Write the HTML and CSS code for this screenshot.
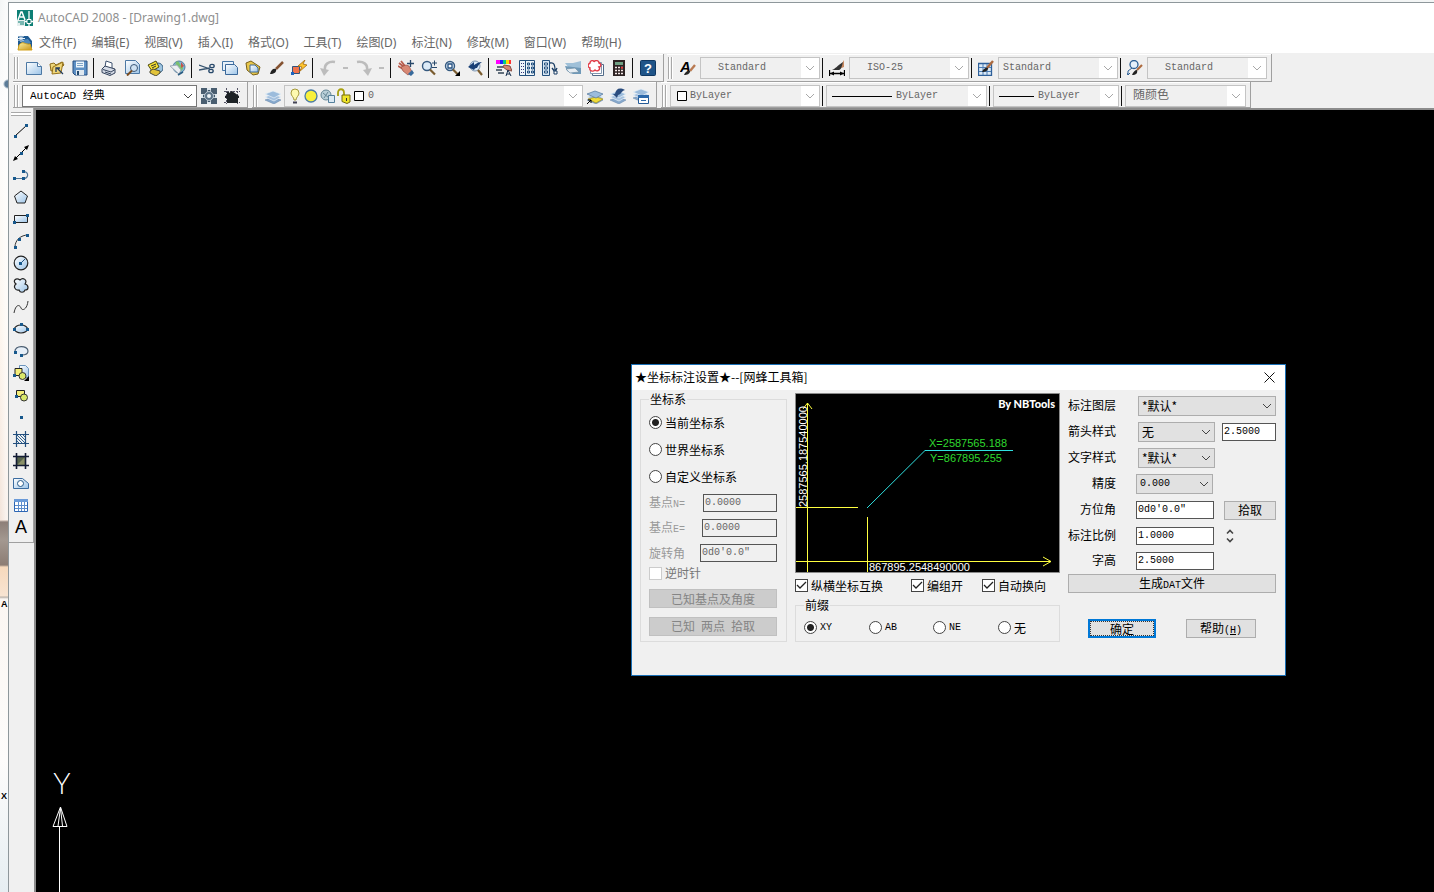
FILE: index.html
```html
<!DOCTYPE html>
<html lang="zh-CN">
<head>
<meta charset="utf-8">
<title>AutoCAD 2008 - [Drawing1.dwg]</title>
<link rel="stylesheet" href="styles.css">
</head>
<body>
<svg class="defs" width="0" height="0" aria-hidden="true">
  <defs>
    <linearGradient id="sheet" x1="0" y1="0" x2="1" y2="1"><stop offset="0" stop-color="#fff"/><stop offset="1" stop-color="#9cc4e8"/></linearGradient>
    <linearGradient id="gold" x1="0" y1="0" x2="1" y2="1"><stop offset="0" stop-color="#fbf0a0"/><stop offset="1" stop-color="#c89418"/></linearGradient>
    <g id="stack"><path d="M0 12l8-3 8 3-7 4z" fill="#86a8cc" stroke="#6484a8" stroke-width=".5"/><path d="M0 9l8-3 8 3-7 4z" fill="#a4c0de" stroke="#e8f0f8" stroke-width=".7"/><path d="M0 6l8-3 8 3-7 4z" fill="#9cbcdc" stroke="#e8f0f8" stroke-width=".7"/></g>
    <g id="lens"><circle cx="6" cy="6" r="4.500" fill="#dcebf8" stroke="#35597f" stroke-width="1.400"/><path d="M9 9.500l5 5" stroke="#7a5c30" stroke-width="2.200"/></g>
    <g id="printer"><path d="M4 7l1-6 6 2v6z" fill="#fff" stroke="#3e5270"/><path d="M1 9l3-3 10 3v4l-5 2.500-8-3z" fill="#d5dbe6" stroke="#34435c"/><path d="M2 9.500l8 2.500 4-2.500M4 12l6 2" stroke="#34435c" fill="none"/></g>
  </defs>
</svg>
<div class="desk" aria-hidden="true"><span class="tile a">A</span><span class="tile x">X</span></div>
<main class="app">
  <header class="title">
    <svg width="16" height="16" viewBox="0 0 16 16"><path d="M0 0h16v16H0z" fill="#0d7f75"/><path d="M0 10h8v6H0z" fill="#e4efee"/><path d="M1 10L4 2h1l3 8M3 7h4" stroke="#fff" stroke-width="1.500" fill="none"/><path d="M12 1v8M8 11.500h8M12 14v2" stroke="#fff" stroke-width="1.300"/><path d="M10 9.500h4v4h-4z" fill="#0d6f68" stroke="#fff"/><path d="M1 12h6M3 14h4" stroke="#0d7f75"/></svg>
    <span>AutoCAD 2008 - [Drawing1.dwg]</span>
  </header>
  <nav class="menu">
    <svg width="16" height="16" viewBox="0 0 16 16"><path d="M1 1h10l4 5v9H1z" fill="#1e5a92"/><path d="M5 5l6-1 3 4-9 2z" fill="#4e88bc"/><path d="M4 0v7M0 3.500h8M1.500 1l5 5M6.500 1l-5 5" stroke="#e8f2fa"/><path d="M1 15l1-5c4-5 6 0 11-1l2 6z" fill="url(#gold)" stroke="#d3a21c"/></svg>
    <button>文件(F)</button><button>编辑(E)</button><button>视图(V)</button><button>插入(I)</button><button>格式(O)</button><button>工具(T)</button><button>绘图(D)</button><button>标注(N)</button><button>修改(M)</button><button>窗口(W)</button><button>帮助(H)</button>
  </nav>

  <div class="row first">
    <div class="bar" role="toolbar" aria-label="标准">
      <i class="grip"></i>
      <button class="tool" aria-label="新建"><svg viewBox="0 0 16 16"><path d="M.5 2.500h11l4 4v8H.5z" fill="url(#sheet)" stroke="#4c78a4"/><path d="M11.500 2.500v4h4" fill="#fff" stroke="#4c78a4"/></svg></button>
      <button class="tool" aria-label="打开"><svg viewBox="0 0 16 16"><path d="M1 4l4-1 2 2 6-3 2 3-6 5-7 1z" fill="url(#gold)" stroke="#8c6a18"/><path d="M3 14l1-7 10-5-2 11z" fill="#f0d678" stroke="#96731c"/><path d="M8 8l6 6M7 12V8h4" stroke="#243c5c" stroke-width="1.300" fill="none"/></svg></button>
      <button class="tool" aria-label="保存"><svg viewBox="0 0 16 16"><path d="M1 1h14v14H3l-2-2z" fill="#5d8fc4" stroke="#274f82"/><path d="M4 1.500h8v6H4z" fill="#eef5fb"/><path d="M5 3.500h6M5 5.500h6" stroke="#82a6c8"/><path d="M4 10h8v5H4z" fill="#dfe8f0"/><path d="M5 11h2v4H5z" fill="#24496f"/></svg></button>
      <i class="sep"></i>
      <button class="tool" aria-label="打印"><svg viewBox="0 0 16 16"><use href="#printer"/></svg></button>
      <button class="tool" aria-label="打印预览"><svg viewBox="0 0 16 16"><path d="M1.500.500h10l4 4v9h-14z" fill="url(#sheet)" stroke="#4c78a4"/><circle cx="10" cy="8" r="3.500" fill="#cfe2f2" stroke="#3c5878"/><path d="M8 10.500l-5 5" stroke="#7a4c20" stroke-width="2"/></svg></button>
      <button class="tool" aria-label="发布"><svg viewBox="0 0 16 16"><circle cx="11" cy="8" r="5" fill="#9ec4e0" stroke="#365e80"/><path d="M1 5l8-4 3 6-7 4z" fill="#f8e234" stroke="#4e4b12"/><path d="M4 6l5-2M5 8l4-2" stroke="#333"/><path d="M3 11l3-2 7 2v2l-4 3-6-3z" fill="#e2c33a" stroke="#4d4d38"/></svg></button>
      <button class="tool" aria-label="三维 DWF"><svg viewBox="0 0 16 16"><circle cx="9" cy="7" r="6" fill="#7db4dc" stroke="#567f9c"/><path d="M6 2c4-2 3 3 5 3s4 4-1 7c-1-3-4-2-5-5z" fill="#7cc070"/><path d="M11 2l3 4-3 2z" fill="#c4534a"/><path d="M0 6l7-1 4 5-2 4z" fill="#eceff2" stroke="#a0aab8"/><path d="M8 15l5-3" stroke="#2a5c82" stroke-width="1.500"/></svg></button>
      <i class="sep"></i>
      <button class="tool" aria-label="剪切"><svg viewBox="0 0 16 16"><path d="M0 5l11 4M0 10l11-2" stroke="#36536f" stroke-width="1.300"/><ellipse cx="13" cy="6" rx="2.200" ry="1.700" fill="none" stroke="#27486a" stroke-width="1.300"/><ellipse cx="12" cy="11" rx="2.200" ry="1.700" fill="none" stroke="#27486a" stroke-width="1.300"/></svg></button>
      <button class="tool" aria-label="复制"><svg viewBox="0 0 16 16"><path d="M.5 1.500h11v9H.5z" fill="#e8f1fa" stroke="#4676a6"/><path d="M3.500 4.500h9l3 3v7h-12z" fill="url(#sheet)" stroke="#3a689a"/></svg></button>
      <button class="tool" aria-label="粘贴"><svg viewBox="0 0 16 16"><path d="M1 3l5-2 9 6-2 7-5 1-6-5z" fill="#e7c64a" stroke="#78601a"/><path d="M5 5h5l3 3v4H5z" fill="url(#sheet)" stroke="#3a689a"/></svg></button>
      <button class="tool" aria-label="特性匹配"><svg viewBox="0 0 16 16"><path d="M15 2L8 9" stroke="#855332" stroke-width="2.500"/><path d="M2 14c1-4 3-6 6-5 1 3-2 5-6 5z" fill="#222"/></svg></button>
      <button class="tool" aria-label="块编辑器"><svg viewBox="0 0 16 16"><path d="M1.500 6.500h7v7h-7z" fill="#f0734c" stroke="#31527c"/><path d="M14 0L7 6l4 1-3 5 8-7-4-1z" fill="#ffc52c" stroke="#a26812" stroke-width=".8"/><path d="M0 12h3v3H0z" fill="#1c64c0"/></svg></button>
      <i class="sep"></i>
      <button class="tool" aria-label="放弃" disabled><svg viewBox="0 0 16 16"><path d="M15 2C9 1 4 4 5 10" fill="none" stroke="#bcbcbc" stroke-width="2.500"/><path d="M0 8l9 2-5 6z" fill="#bcbcbc"/></svg></button>
      <button class="drop" aria-label="放弃列表" disabled></button>
      <button class="tool" aria-label="重做" disabled><svg viewBox="0 0 16 16"><path d="M1 2c6-1 11 2 10 8" fill="none" stroke="#bcbcbc" stroke-width="2.500"/><path d="M16 8l-9 2 5 6z" fill="#bcbcbc"/></svg></button>
      <button class="drop" aria-label="重做列表" disabled></button>
      <i class="sep"></i>
      <button class="tool" aria-label="平移"><svg viewBox="0 0 16 16"><path d="M1 3l5 4M0 6l5 3M3 1l4 5" stroke="#b85c4c" stroke-width="1.800"/><path d="M3 7l5-2 3 1 3 6-4 3-5-4z" fill="#d88874" stroke="#994c40" stroke-width=".7"/><path d="M10 14l4-4 2 3-3 3z" fill="#376a9c"/><path d="M12.500 0v7M9 3.500h7" stroke="#27486a" stroke-width="1.300"/></svg></button>
      <button class="tool" aria-label="实时缩放"><svg viewBox="0 0 16 16"><use href="#lens"/><path d="M11 3h5M13.500.500v5M11 7.500h5" stroke="#27486a"/></svg></button>
      <button class="tool" aria-label="窗口缩放"><svg viewBox="0 0 16 16"><use href="#lens"/><path d="M4 4h4v4H4z" fill="#fff" stroke="#245080" stroke-width="1.300"/><path d="M16 11v5h-5z" fill="#000"/></svg></button>
      <button class="tool" aria-label="缩放上一个"><svg viewBox="0 0 16 16"><circle cx="8" cy="6" r="5" fill="#dcebf8" stroke="#7c94b0"/><path d="M11 10l4 5" stroke="#7a5c30" stroke-width="2.200"/><path d="M1 7l6-5v3c3-2 5-3 8-3-3 2-4 4-5 6-1 0-2 0-3 2z" fill="#183f76"/></svg></button>
      <i class="sep"></i>
      <button class="tool" aria-label="特性"><svg viewBox="0 0 16 16"><path d="M0 0h4v4H0z" fill="#f0f"/><path d="M4 0h3v4H4z" fill="#22f"/><path d="M7 0h3v4H7z" fill="#0c8"/><path d="M10 0h3v4h-3z" fill="#fd0"/><path d="M13 0h2v4h-2z" fill="#f33"/><path d="M8 5l6 1 2 5-5-1-4-3z" fill="#d58672" stroke="#844b42"/><path d="M1 7h6M0 10h6M2 13h6" stroke="#345" stroke-width="1.300"/><path d="M10 16l2-6 3 6M11 14h3" stroke="#112b4a" fill="none"/></svg></button>
      <button class="tool" aria-label="设计中心"><svg viewBox="0 0 16 16"><path d="M.5.500h15v15H.5z" fill="#eef5fa" stroke="#234f7c"/><path d="M6.500 0v16" stroke="#234f7c"/><path d="M2 3.500h3M2 6.500h3M2 9.500h3M2 12.500h3" stroke="#337" stroke-dasharray="1 1"/><path d="M8.500 3h2v2h-2zm4 0h2v2h-2zm-4 4h2v2h-2zm4 0h2v2h-2zm-4 4h2v2h-2zm4 0h2v2h-2z" fill="#cfe1f0" stroke="#214f7e"/></svg></button>
      <button class="tool" aria-label="工具选项板"><svg viewBox="0 0 16 16"><path d="M.5.500h7v15h-7z" fill="#d7e6f3" stroke="#234f7c"/><path d="M2.500 3h3v2h-3zm0 4h3v2h-3zm0 4h3v2h-3z" fill="#fff" stroke="#234f7c"/><path d="M8 3c4-1 5 2 5 7M10 8l3 4 2-4" stroke="#163a62" fill="none" stroke-width="1.300"/><path d="M12 11h3v3h-3z" fill="#fff" stroke="#163a62"/></svg></button>
      <button class="tool" aria-label="图纸集"><svg viewBox="0 0 16 16"><path d="M0 3h8l8-2v8L4 8z" fill="#9fc0d8"/><path d="M0 6l8 1 8 1v6h-8L2 11z" fill="#6f99b8"/><path d="M1 9l9-1 4 4-9 1z" fill="#e7edf2" stroke="#7190a8" stroke-width=".7"/></svg></button>
      <button class="tool" aria-label="标记集"><svg viewBox="0 0 16 16"><path d="M4.500 4.500h11v11h-11z" fill="#fff" stroke="#506a88"/><path d="M2.500 2.500h11v11h-11z" fill="#fff" stroke="#8296ae"/><path d="M2 3c0-3 4-3 4-1 1-2 5-2 5 1 3 1 2 4 0 4 2 3-2 5-4 3-2 2-6 1-5-2-3-1-2-4 0-5z" fill="#fff" stroke="#e23c48" stroke-width="1.400"/></svg></button>
      <button class="tool" aria-label="计算器"><svg viewBox="0 0 16 16"><path d="M2 0h12v16H2z" fill="#2c2222"/><path d="M4 2h8v3H4z" fill="#6fa083"/><path d="M4 7.500h8M4 10.500h8M4 13.500h8" stroke="#f4e8e8" stroke-width="1.600" stroke-dasharray="2 1"/><path d="M10 7h2v1.500h-2z" fill="#e33"/></svg></button>
      <i class="sep"></i>
      <button class="tool" aria-label="帮助"><svg viewBox="0 0 16 16"><rect x=".5" y=".5" width="15" height="15" rx="1" fill="#1f5488" stroke="#0f3761"/><text x="8" y="13" class="help">?</text></svg></button>
    </div>
    <div class="bar" role="toolbar" aria-label="样式">
      <i class="grip"></i>
      <button class="tool wide" aria-label="文字样式"><svg viewBox="0 0 16 16"><text x="0" y="12" class="letter">A</text><path d="M15 5l-5 6" stroke="#b97a52" stroke-width="2.400"/><path d="M4 15c1-3 4-5 6-4 0 3-3 4-6 4z" fill="#222"/></svg></button>
      <select class="combo pad" aria-label="文字样式列表" disabled><option>Standard</option></select>
      <i class="sep"></i>
      <button class="tool wide" aria-label="标注样式"><svg viewBox="0 0 16 16"><path d="M15 0v7l-5 2z" fill="#c98a62"/><path d="M3 10c3-1 5-4 11-8-1 4-2 8-4 8z" fill="#333"/><path d="M.5 10v6M15.500 10v6M1 13.500h14" stroke="#000" stroke-width="1.300"/><path d="M1 13.500l4-2v4zM15 13.500l-4-2v4z"/></svg></button>
      <select class="combo pad" aria-label="标注样式列表" disabled><option>ISO-25</option></select>
      <i class="sep"></i>
      <button class="tool wide" aria-label="表格样式"><svg viewBox="0 0 16 16"><path d="M.5 3.500h13v12H.5z" fill="#dceaf6" stroke="#2f609a" stroke-width="1.300"/><path d="M1 7.500h12M1 11.500h12M5 4v11M9 4v11" stroke="#4c7db4"/><path d="M15 1L9 8" stroke="#ad6a3e" stroke-width="2.400"/><path d="M4 12c1-3 4-5 6-4 0 3-3 4-6 4z" fill="#222"/></svg></button>
      <select class="combo" aria-label="表格样式列表" disabled><option>Standard</option></select>
      <i class="sep"></i>
      <button class="tool wide" aria-label="多重引线样式"><svg viewBox="0 0 16 16"><circle cx="7" cy="4.500" r="4" fill="#e5f0fa" stroke="#2c5f94" stroke-width="1.300"/><path d="M5 8l-4 3v4M0 13l1 2 2-2" stroke="#2c5f94" fill="none"/><path d="M15 5l-5 5" stroke="#ad6a3e" stroke-width="2.200"/><path d="M5 15c1-3 3-5 5-5 1 3-1 5-5 5z" fill="#222"/></svg></button>
      <select class="combo pad" aria-label="多重引线样式列表" disabled><option>Standard</option></select>
    </div>
  </div>

  <div class="row second">
    <div class="bar" role="toolbar" aria-label="工作空间">
      <i class="grip"></i>
      <select class="combo space" aria-label="工作空间列表"><option>AutoCAD 经典</option></select>
      <button class="tool" aria-label="工作空间设置"><svg viewBox="0 0 16 16"><path d="M0 0h16v16H0z" fill="#4a5e70"/><path d="M6 0h4v16H6zM0 6h16v4H0z" fill="#dfe8ee"/><path d="M8 2v12M2 8h12M4 4l8 8M12 4l-8 8" stroke="#40566a" stroke-width="2.500"/><circle cx="8" cy="8" r="4.500" fill="#5d7488" stroke="#dfe8ee" stroke-width=".7"/><circle cx="8" cy="8" r="2" fill="#eef3f6"/></svg></button>
      <button class="tool" aria-label="我的工作空间"><svg viewBox="0 0 16 16"><path d="M2.500 0v16M0 3.500h16M13.500 0v16M0 14.500h16" stroke="#556" stroke-dasharray="2 1"/><path d="M1 8l2-1V4h2v1l3-2 7 5v2h-1v5H3v-5H1z" fill="#1d2226"/></svg></button>
    </div>
    <div class="bar" role="toolbar" aria-label="图层">
      <i class="grip"></i>
      <button class="tool" aria-label="图层特性管理器"><svg viewBox="0 0 16 16"><use href="#stack"/></svg></button>
      <div class="combo holder layer">
        <svg width="74" height="16" viewBox="0 0 74 16"><path d="M4 12C4 9 1 8 1 5a4 4 0 018 0c0 3-3 4-3 7z" fill="#fdf9b0" stroke="#a3983c"/><path d="M3 14.500h4" stroke="#445" stroke-width="2"/><circle cx="21" cy="8" r="6" fill="#f8f03c" stroke="#4a7ba4" stroke-width="1.300"/><circle cx="36" cy="7" r="5" fill="#b9cfd8" stroke="#668796"/><path d="M38.500 7.500h6v7h-6z" fill="#dbe9f3" stroke="#55809c"/><path d="M33 5l6 5M38 4l-4 6" stroke="#668796"/><path d="M48 8V5c0-5 6-5 6 0v4" fill="none" stroke="#a8a010" stroke-width="1.800"/><path d="M52 7h8v7l-3 1.500-5-2z" fill="#eee428" stroke="#736b12"/><path d="M56.500 10v3" stroke="#333"/><path d="M64.500 3.500h9v9h-9z" fill="#fff" stroke="#000"/></svg>
        <select aria-label="图层列表" disabled><option>0</option></select>
      </div>
      <button class="tool" aria-label="将对象的图层置为当前"><svg viewBox="0 0 16 16"><use href="#stack"/><path d="M1 11l8-2 7 2-7 4z" fill="#f0dc38" stroke="#9a8a20" stroke-width=".7"/><path d="M0 6l8-3 8 3-7 4z" fill="#9cbcdc" stroke="#56789c" stroke-width=".7"/><path d="M0 16l4-4M1 12h3v3" stroke="#000" fill="none"/></svg></button>
      <button class="tool" aria-label="上一个图层"><svg viewBox="0 0 16 16"><use href="#stack"/><path d="M3 6l4 4 1-3c3 0 3-4 7-5C9-1 6 1 5 6z" fill="#2a4c7e"/></svg></button>
      <button class="tool" aria-label="图层状态管理器"><svg viewBox="0 0 16 16"><g transform="translate(0 -2)"><use href="#stack"/></g><path d="M5.500 7.500h10v8h-10z" fill="#fff" stroke="#245a96"/><path d="M5 7h11v3H5z" fill="#2d69aa"/><path d="M8 12.500h5" stroke="#2d69aa"/></svg></button>
    </div>
    <div class="bar props" role="toolbar" aria-label="特性">
      <i class="grip"></i>
      <div class="combo holder color"><svg width="12" height="12" viewBox="0 0 12 12"><path d="M1.500 1.500h9v9h-9z" fill="#fff" stroke="#000"/></svg><select aria-label="颜色" disabled><option>ByLayer</option></select></div>
      <i class="sep"></i>
      <div class="combo holder ltype"><svg width="60" height="12" viewBox="0 0 60 12"><path d="M0 6.500h60" stroke="#000"/></svg><select aria-label="线型" disabled><option>ByLayer</option></select></div>
      <i class="sep"></i>
      <div class="combo holder lweight"><svg width="35" height="12" viewBox="0 0 35 12"><path d="M0 6.500h35" stroke="#000"/></svg><select aria-label="线宽" disabled><option>ByLayer</option></select></div>
      <i class="sep"></i>
      <select class="combo plot" aria-label="打印样式" disabled><option>随颜色</option></select>
    </div>
  </div>

  <div class="work">
    <aside class="side">
      <div class="palette" role="toolbar" aria-label="绘图" aria-orientation="vertical">
      <i class="hgrip"></i>
      <button aria-label="直线"><svg viewBox="0 0 16 16"><path d="M2 13L14 2" stroke="#000"/><path class="n" d="M1 12h3v3H1zM12 1h3v3h-3z"/></svg></button>
      <button aria-label="构造线"><svg viewBox="0 0 16 16"><path d="M2 14L14 2" stroke="#000"/><path d="M0 16l2-5 3 3zM16 0l-5 2 3 3z"/><path class="n" d="M7 7h3v3H7z"/></svg></button>
      <button aria-label="多段线"><svg viewBox="0 0 16 16"><path d="M2 11.500h8c6 0 6-6 1-7" stroke="#4e7496" stroke-width="1.200" fill="none"/><path class="n" d="M0 10h3v3H0zM9 10h3v3H9zM9 3h3v3H9z"/></svg></button>
      <button aria-label="正多边形"><svg viewBox="0 0 16 16"><path d="M8 2l6.500 5-2.500 7H4L1.500 7z" fill="url(#sheet)" stroke="#222"/></svg></button>
      <button aria-label="矩形"><svg viewBox="0 0 16 16"><path d="M1.500 4.500h13v7h-13z" fill="url(#sheet)" stroke="#222"/><path class="n" d="M0 10h3v3H0zM13 3h3v3h-3z"/></svg></button>
      <button aria-label="圆弧"><svg viewBox="0 0 16 16"><path d="M2 14C2 7 8 2 15 2" stroke="#333" fill="none"/><path class="n" d="M1 13h3v3H1zM5 5h3v3H5zM13 1h3v3h-3z"/></svg></button>
      <button aria-label="圆"><svg viewBox="0 0 16 16"><circle cx="8" cy="8" r="6.800" fill="url(#sheet)" stroke="#222" stroke-width="1.200"/><path d="M8 8l4-4" stroke="#24547f"/><path class="n" d="M6 7h3v3H6z"/></svg></button>
      <button aria-label="修订云线"><svg viewBox="0 0 16 16"><path d="M3 7c-4-3 0-7 4-4 3-3 8 0 5 4 4 1 4 6 0 6-1 3-5 3-6 0-4 1-6-4-3-6z" fill="url(#sheet)" stroke="#222" stroke-width="1.200"/></svg></button>
      <button aria-label="样条曲线"><svg viewBox="0 0 16 16"><path d="M1 14C3 4 7 6 8 9s6 2 7-7" stroke="#333" fill="none"/></svg></button>
      <button aria-label="椭圆"><svg viewBox="0 0 16 16"><ellipse cx="8" cy="8" rx="6.500" ry="4" fill="url(#sheet)" stroke="#222" stroke-width="1.200"/><path class="n" d="M0 7h3v3H0zM13 7h3v3h-3zM7 2h3v3H7z"/></svg></button>
      <button aria-label="椭圆弧"><svg viewBox="0 0 16 16"><path d="M2 9C1 2 15 2 15 8c0 3-3 4-6 4" stroke="#4c5f72" stroke-width="1.200" fill="#e6eff8"/><path class="n" d="M1 8h3v3H1zM7 11h3v3H7z"/></svg></button>
      <button aria-label="插入块"><svg viewBox="0 0 16 16"><path d="M6.500.500h6l3 3v9h-9z" fill="url(#sheet)" stroke="#6a94bc"/><path d="M2 3.500h7v7H2z" fill="#f4ee78" stroke="#222"/><circle cx="9.500" cy="11" r="3.500" fill="#d9e86a" stroke="#333"/><path class="n" d="M0 9h3v3H0z"/><path d="M16 11v5h-5z"/></svg></button>
      <button aria-label="创建块"><svg viewBox="0 0 16 16"><path d="M3.500 3.500h8v6h-8z" fill="#f4ee78" stroke="#222"/><circle cx="11" cy="10.500" r="3.500" fill="#d9e86a" stroke="#333"/><path class="n" d="M2 8h3v3H2z"/></svg></button>
      <button aria-label="点"><svg viewBox="0 0 16 16"><path class="n" d="M7 7h3v3H7z"/></svg></button>
      <button aria-label="图案填充"><svg viewBox="0 0 16 16"><path d="M3.500 0v16M12.500 0v16M0 3.500h16M0 12.500h16" stroke="#234f7e" stroke-width="1.200"/><path d="M4 7l5 5M4 4l8 8M7 4l5 5M4 10l2 2M10 4l2 2" stroke="#2f6292"/></svg></button>
      <button aria-label="渐变色"><svg viewBox="0 0 16 16"><path d="M3 3h10v10H3z" fill="#53614a"/><path d="M3 13L13 3v10z" fill="#8a9068"/><path d="M3.500 0v16M12.500 0v16M0 3.500h16M0 12.500h16" stroke="#111a33" stroke-width="1.600"/></svg></button>
      <button aria-label="面域"><svg viewBox="0 0 16 16"><path d="M.5 13.500v-10h9l6 5v5z" fill="url(#sheet)" stroke="#3a6ca0"/><circle cx="7.500" cy="8.500" r="3" fill="#fff" stroke="#245888"/></svg></button>
      <button aria-label="表格"><svg viewBox="0 0 16 16"><path d="M1.500 2.500h13v12h-13z" fill="#fff" stroke="#2d66b4"/><path d="M1 2h14v3H1z" fill="#6a9ad8"/><path d="M2 8.500h12M2 11.500h12M5.500 5v9M8.500 5v9M11.500 5v9" stroke="#5d8dcc"/></svg></button>
      <button class="mtext" aria-label="多行文字">A</button>
      </div>
    </aside>

    <section class="canvas" aria-label="绘图区">
      <svg class="ucs" width="30" height="126" viewBox="0 0 30 126"><text x="10" y="28" text-anchor="middle">Y</text><path d="M8.500 41L15 60.500H1zM8.500 42L6 60M8.500 42l2 18M7.500 60.500V126"/></svg>

      <form class="dialog" role="dialog" aria-label="坐标标注设置">
        <div class="caption"><span>★坐标标注设置★--[网蜂工具箱]</span><button type="button" aria-label="关闭"><svg width="11" height="11" viewBox="0 0 11 11"><path d="M.5.500l10 10M10.500.500l-10 10" stroke="#111" fill="none"/></svg></button></div>
        <div class="content">
          <fieldset class="coords">
            <legend>坐标系</legend>
            <label class="opt"><input type="radio" name="cs" checked>当前坐标系</label>
            <label class="opt"><input type="radio" name="cs">世界坐标系</label>
            <label class="opt"><input type="radio" name="cs">自定义坐标系</label>
            <div class="base"><label for="bn">基点<span class="lat">N=</span></label><input class="txt w1" id="bn" value="0.0000" disabled></div>
            <div class="base"><label for="be">基点<span class="lat">E=</span></label><input class="txt w2" id="be" value="0.0000" disabled></div>
            <div class="base"><label for="ro">旋转角</label><input class="txt w3" id="ro" value="0d0&#39;0.0&quot;" disabled></div>
            <label class="ccw"><input type="checkbox" disabled>逆时针</label>
            <button class="btn" type="button" disabled>已知基点及角度</button>
            <button class="btn" type="button" disabled>已知<span class="lat"> </span>两点<span class="lat"> </span>拾取</button>
          </fieldset>

          <div class="middle">
            <svg class="preview" viewBox="0 0 265 180">
              <path d="M.5.500h264v179H.5z" fill="#000" stroke="#8a8a8a"/>
              <path d="M12.500 10v169M8 16l4.500-6 4.500 6M1 114.500h62M72.500 124v55M1 168.500h255M248 164l8 4.500-8 4.500" stroke="#ffff40" fill="none"/>
              <path d="M72 115l58-57.500h88" stroke="#2fe0e0" fill="none"/>
              <text x="134" y="54" class="green">X=2587565.188</text>
              <text x="135" y="69" class="green">Y=867895.255</text>
              <text x="74" y="178" class="white">867895.2548490000</text>
              <text transform="translate(12 114) rotate(-90)" class="white">2587565.187540000</text>
              <text x="260" y="15" text-anchor="end" class="brand">By NBTools</text>
            </svg>
            <div class="checks">
              <label><input type="checkbox" checked>纵横坐标互换</label>
              <label><input type="checkbox" checked>编组开</label>
              <label><input type="checkbox" checked>自动换向</label>
            </div>
            <fieldset class="prefix">
              <legend>前缀</legend>
              <label><input type="radio" name="pre" checked><span class="lat">XY</span></label>
              <label><input type="radio" name="pre"><span class="lat">AB</span></label>
              <label><input type="radio" name="pre"><span class="lat">NE</span></label>
              <label><input type="radio" name="pre">无</label>
            </fieldset>
          </div>

          <div class="right">
            <div class="field"><label for="f1">标注图层</label><select class="pick long" id="f1"><option>*默认*</option></select></div>
            <div class="field"><label for="f2">箭头样式</label><select class="pick" id="f2"><option>无</option></select><input class="txt end" aria-label="箭头大小" value="2.5000"></div>
            <div class="field"><label for="f3">文字样式</label><select class="pick" id="f3"><option>*默认*</option></select></div>
            <div class="field"><label for="f4">精度</label><select class="pick num" id="f4"><option>0.000</option></select></div>
            <div class="field"><label for="f5">方位角</label><input class="txt mid" id="f5" value="0d0&#39;0.0&quot;"><button class="btn get" type="button">拾取</button></div>
            <div class="field"><label for="f6">标注比例</label><input class="txt mid" id="f6" value="1.0000"><button class="spin" type="button" aria-label="调整标注比例"><svg width="8" height="14" viewBox="0 0 8 14"><path d="M1 4.500l3-3 3 3M1 9.500l3 3 3-3" stroke="#444" stroke-width="1.600" fill="none"/></svg></button></div>
            <div class="field low"><label for="f7">字高</label><input class="txt mid" id="f7" value="2.5000"></div>
            <button class="btn full" type="button">生成<span class="lat">DAT</span>文件</button>
            <div class="actions"><button class="btn ok" type="button">确定</button><button class="btn hlp" type="button">帮助<span class="lat">(<u>H</u>)</span></button></div>
          </div>
        </div>
      </form>
    </section>
  </div>
</main>
</body>
</html>
```
FILE: styles.css
```css
* { box-sizing: border-box; }

body {
  margin: 0;
  min-height: 100vh;
  display: flex;
  overflow: hidden;
  background: #f3f5f5;
  font: 12px/16px "Noto Sans", "Noto Sans CJK SC", sans-serif;
  color: #000;
}

button, input, select { font: inherit; color: inherit; margin: 0; }
button { padding: 0; border: 0; background: none; }
svg { display: block; flex: none; }
.defs { position: absolute; }

.desk {
  width: 8px;
  flex: none;
  background:
    radial-gradient(circle at 8px 84px, #5c7c98 3px, transparent 5px),
    linear-gradient(90deg, transparent, #ffffff88 6px) 0 0 / 100% 520px no-repeat,
    linear-gradient(#f4f6f6 0, #fdfdfd 120px, #fdf6ee 330px, #f3e4da 520px, #8d7f78 522px, #a39890 540px, #8c7d74 565px, #f6d9bc 567px, #f8e4d2 596px, #b8b0a8 597px, #fbf6f2 599px, #fdfcfb 760px, #e6eef2 892px);
}
.tile { display: block; padding-left: 1px; font: bold 9px/12px "Liberation Sans", sans-serif; }
.tile.a { margin-top: 598px; }
.tile.x { margin-top: 180px; }

.app {
  flex: 1;
  min-width: 0;
  margin-top: 2px;
  display: flex;
  flex-direction: column;
  border: solid #8e979b;
  border-width: 1px 0 0 1px;
  background: #f0f0f0;
}

.title, .menu { display: flex; align-items: center; background: #fff; padding-left: 8px; color: #8f8f8f; }
.title { height: 29px; gap: 5px; }
.menu { height: 21px; color: #666; }
.menu svg { margin-right: 6px; }
.menu button { margin-right: 15px; white-space: nowrap; }

.row { display: flex; }
.row.first { height: 29px; padding: 1px 0 0 4px; gap: 3px; }
.row.second { height: 26px; padding-left: 4px; gap: 4px; }
.bar {
  display: flex;
  align-items: center;
  padding-right: 4px;
  border: solid #a0a0a0;
  border-width: 0 1px 1px 0;
  box-shadow: inset 0 1px #fff;
}
.first .bar { padding-top: 1px; }
.second .bar { padding-top: 2px; }
.grip { width: 9px; height: 22px; flex: none; background: linear-gradient(90deg, transparent 1px, #a8a8a8 1px 2px, #fff 2px 3px, transparent 3px 4px, #a8a8a8 4px 5px, #fff 5px 6px, transparent 6px); }
.sep { width: 6px; height: 20px; flex: none; background: linear-gradient(90deg, transparent 2px, #111 2px 3px, transparent 3px); }
.first .combo + .sep { width: 5px; }
.tool { width: 23px; height: 22px; flex: none; display: grid; place-items: center; }
.tool.wide { width: 24px; }
.tool svg { width: 16px; height: 16px; }
.drop { width: 13px; height: 20px; background: linear-gradient(#bdbdbd, #bdbdbd) center / 5px 2px no-repeat; }
.help { font: bold 13px "Liberation Sans", sans-serif; fill: #fff; text-anchor: middle; }
.letter { font: italic bold 15px "Liberation Sans", sans-serif; }

.combo {
  width: 120px;
  height: 22px;
  flex: none;
  border: 1px solid #c4c4c4;
  border-radius: 0;
  font: 10px/14px "Liberation Mono", "Noto Sans CJK SC", monospace;
}
select { appearance: none; border-radius: 0; }
select:disabled { opacity: 1; color: #666; }
select.combo, .holder select {
  padding: 0 18px 0 4px;
  background:
    url("data:image/svg+xml,%3Csvg xmlns='http://www.w3.org/2000/svg' width='10' height='6'%3E%3Cpath d='M1 1l4 4 4-4' fill='none' stroke='%23a8a8a8'/%3E%3C/svg%3E") right 4px center no-repeat,
    linear-gradient(#fff, #fff) right / 18px 100% no-repeat,
    #f0f0f0;
}
select.combo.pad { padding-left: 17px; }
select.combo.space {
  width: 175px;
  padding-left: 7px;
  border-color: #777;
  font-size: 11px;
  background:
    url("data:image/svg+xml,%3Csvg xmlns='http://www.w3.org/2000/svg' width='10' height='6'%3E%3Cpath d='M1 1l4 4 4-4' fill='none' stroke='%23444'/%3E%3C/svg%3E") right 3px center no-repeat,
    #fff;
}
.holder { display: flex; align-items: center; padding-left: 5px; gap: 4px; }
.holder select { flex: 1; min-width: 0; height: 100%; border: 0; padding-left: 0; }
.layer { width: 299px; }
.color { width: 150px; gap: 2px; }
.ltype { width: 161px; }
.lweight { width: 126px; }
select.combo.plot { width: 121px; font-size: 12px; padding-left: 7px; }

.work { flex: 1; display: flex; min-height: 0; }
.side { width: 27px; flex: none; border-right: 2px solid #8c8c8c; }
.palette {
  width: 25px;
  padding: 0 0 4px;
  display: flex;
  flex-direction: column;
  align-items: center;
  border: solid #a0a0a0;
  border-width: 0 1px 1px 0;
}
.palette button { width: 24px; height: 22px; display: grid; place-items: center; }
.palette svg { width: 16px; height: 16px; }
.palette .mtext { font: 18px/20px "Liberation Sans", sans-serif; }
.n { fill: #17588c; }
.hgrip { width: 20px; height: 12px; background: linear-gradient(transparent 4px, #a8a8a8 4px 5px, #fff 5px 7px, #a8a8a8 7px 8px, transparent 8px); }

.canvas { flex: 1; min-width: 0; position: relative; display: flex; align-items: flex-end; background: #000; border-top: 2px solid #8c8c8c; overflow: hidden; }
.ucs { margin-left: 16px; fill: none; stroke: #fff; }
.ucs text { font: 300 29px Lato, sans-serif; fill: #fff; stroke: none; }

.dialog {
  position: absolute;
  left: 595px;
  top: 254px;
  width: 655px;
  border: 1px solid #1a6fb5;
  background: #f0f0f0;
  font: 12px/16px "Noto Sans CJK SC", sans-serif;
}
.lat, .txt { font: 10px/14px "Liberation Mono", monospace; }
.lat { white-space: pre; }
.caption { height: 25px; display: flex; align-items: center; justify-content: space-between; padding: 0 10px 1px 3px; background: #fff; }
.content { display: flex; padding: 2px 9px 33px 8px; }

fieldset { margin: 0; min-width: 0; border: 1px solid #dcdcdc; padding: 0 9px 4px 8px; }
legend { padding: 0 1px; line-height: 14px; height: 14px; }
label { white-space: nowrap; }

.coords { width: 147px; margin-right: 8px; }
.opt { display: flex; align-items: center; gap: 3px; height: 27px; }
legend + .opt { margin-top: 3px; }
.base { display: flex; align-items: center; justify-content: space-between; height: 25px; color: #999; }
.ccw { display: flex; align-items: center; gap: 3px; height: 16px; color: #777; }

input[type="radio"], input[type="checkbox"] { appearance: none; width: 13px; height: 13px; flex: none; border: 1px solid #444; background: #fff; }
input[type="radio"] { border-radius: 50%; }
input[type="radio"]:checked { background: radial-gradient(circle, #222 3px, #fff 4px); }
input[type="checkbox"]:checked { background: #fff url("data:image/svg+xml,%3Csvg xmlns='http://www.w3.org/2000/svg' width='11' height='11'%3E%3Cpath d='M1 5l3 3 6-6' fill='none' stroke='%23222' stroke-width='1.300'/%3E%3C/svg%3E") center no-repeat; }
input[type="checkbox"]:disabled { border-color: #ccc; }

.txt { height: 18px; border: 1px solid #555; border-radius: 0; padding: 0 1px 1px; background: #fff; }
.txt:disabled { background: #f0f0f0; color: #666; }
.w1 { width: 74px; }
.w2 { width: 75px; }
.w3 { width: 77px; }

.btn { height: 19px; line-height: 16px; border: 1px solid #adadad; background: #e1e1e1; text-align: center; }
.btn:disabled { background: #ccc; border-color: #c0c0c0; color: #858585; }
.coords .btn { display: block; width: 128px; margin-top: 9px; }
.coords .ccw + .btn { margin-top: 8px; }

.middle { width: 265px; margin-right: 8px; }
.preview { width: 100%; margin-top: 1px; }
.preview text { font: 11px "Liberation Sans", sans-serif; }
.green { fill: #2fd82f; }
.white { fill: #fff; }
.preview .brand { font: 900 11px Lato, sans-serif; fill: #fff; }
.checks { display: grid; grid-template-columns: 116px 71px 1fr; height: 25px; align-items: center; }
.checks label, .prefix label { display: flex; align-items: center; gap: 3px; }
.prefix { display: grid; grid-template-columns: 65px 64px 65px 1fr; align-items: center; height: 44px; }
.prefix label { padding-top: 6px; }

.right { flex: 1; padding-top: 1px; }
.field { display: flex; align-items: center; height: 26px; }
.field.low { height: 24px; }
.field label { width: 48px; margin-right: 20px; padding-bottom: 2px; text-align: right; }
.pick {
  width: 77px;
  height: 20px;
  margin-left: 2px;
  padding: 0 18px 0 3px;
  border: 1px solid #adadad;
  font: 12px/16px "Noto Sans CJK SC", sans-serif;
  background: url("data:image/svg+xml,%3Csvg xmlns='http://www.w3.org/2000/svg' width='10' height='6'%3E%3Cpath d='M1 1l4 4 4-4' fill='none' stroke='%23444'/%3E%3C/svg%3E") right 3px center no-repeat, #e1e1e1;
}
.pick.long { flex: 1; }
.pick.num { margin-left: 0; font: 10px/16px "Liberation Mono", monospace; }
.mid { width: 78px; }
.end { width: 54px; margin-left: auto; }
.get { width: 52px; margin-left: auto; }
.spin { margin-left: 12px; }
.full { display: block; width: 100%; margin-top: 1px; }
.actions { display: flex; justify-content: space-between; padding: 26px 20px 0; }
.ok { width: 68px; border: 2px solid #0078d7; outline: 1px dotted #333; outline-offset: -3px; line-height: 14px; }
.hlp { width: 70px; }
```
